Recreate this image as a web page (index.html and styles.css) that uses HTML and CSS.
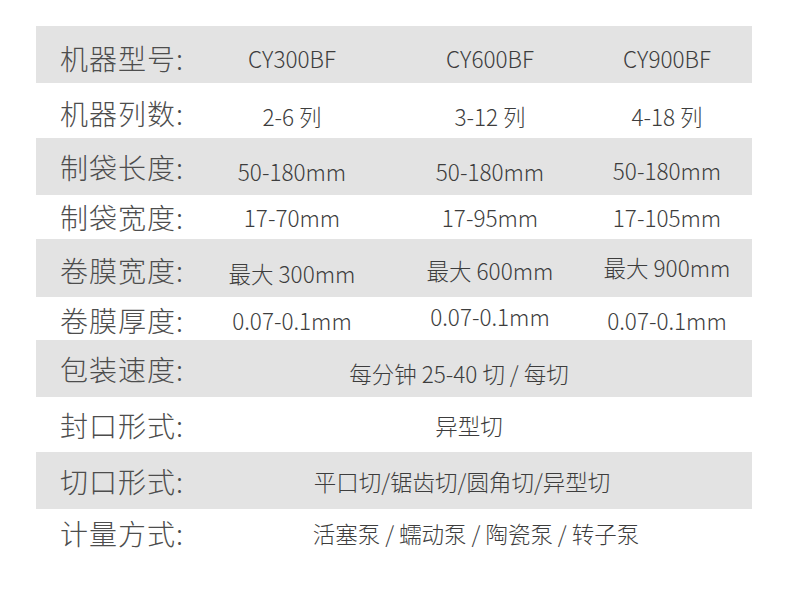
FILE: index.html
```html
<!DOCTYPE html>
<html lang="zh-CN">
<head>
<meta charset="utf-8">
<title>机器参数</title>
<link rel="stylesheet" href="styles.css">
</head>
<body>
<div class="spec">
  <div class="row gray h57 sh5">
    <div class="label">机器型号:</div>
    <div class="val">CY300BF</div>
    <div class="val">CY600BF</div>
    <div class="val">CY900BF</div>
  </div>
  <div class="row h55 sh3">
    <div class="label">机器列数:</div>
    <div class="val dn3">2-6 列</div>
    <div class="val dn3">3-12 列</div>
    <div class="val dn3">4-18 列</div>
  </div>
  <div class="row gray h57">
    <div class="label">制袋长度:</div>
    <div class="val dn6">50-180mm</div>
    <div class="val dn6">50-180mm</div>
    <div class="val dn3">50-180mm</div>
  </div>
  <div class="row h44">
    <div class="label">制袋宽度:</div>
    <div class="val">17-70mm</div>
    <div class="val">17-95mm</div>
    <div class="val">17-105mm</div>
  </div>
  <div class="row gray h58 sh3">
    <div class="label">卷膜宽度:</div>
    <div class="val dn3">最大 300mm</div>
    <div class="val">最大 600mm</div>
    <div class="val up3">最大 900mm</div>
  </div>
  <div class="row h43 sh2">
    <div class="label">卷膜厚度:</div>
    <div class="val">0.07-0.1mm</div>
    <div class="val up4">0.07-0.1mm</div>
    <div class="val">0.07-0.1mm</div>
  </div>
  <div class="row gray h57 sh1">
    <div class="label">包装速度:</div>
    <div class="val span left10 dn6">每分钟 25-40 切 / 每切</div>
  </div>
  <div class="row h55">
    <div class="label">封口形式:</div>
    <div class="val span">异型切</div>
  </div>
  <div class="row gray h57 sh1">
    <div class="label">切口形式:</div>
    <div class="val span left16">平口切/锯齿切/圆角切/异型切</div>
  </div>
  <div class="row h48">
    <div class="label">计量方式:</div>
    <div class="val span right14">活塞泵 / 蠕动泵 / 陶瓷泵 / 转子泵</div>
  </div>
</div>
</body>
</html>
```

FILE: styles.css
```css
html, body {
  margin: 0;
  padding: 0;
  background: #ffffff;
}

body {
  font-family: "Noto Sans CJK SC", "Noto Sans", sans-serif;
  color: #4a4a4a;
}

.spec {
  width: 716px;
  margin: 26px 0 0 36px;
}

.row {
  display: grid;
  grid-template-columns: 164px 184px 212px 142px;
  align-items: center;
  box-sizing: border-box;
}

.gray {
  background: #e3e3e3;
}

.h57 { height: 57px; }
.h55 { height: 55px; }
.h58 { height: 58px; }
.h44 { height: 44px; }
.h43 { height: 43px; }
.h48 { height: 48px; }

.sh1 { padding-top: 1px; }
.sh2 { padding-top: 2px; }
.sh3 { padding-top: 4px; }
.sh5 { padding-top: 6px; }

.label {
  padding-left: 24px;
  font-size: 28px;
  font-weight: 300;
  letter-spacing: 1px;
  line-height: 34px;
  color: #4d4d4d;
  white-space: nowrap;
}

.val {
  text-align: center;
  font-size: 22.5px;
  font-weight: 300;
  line-height: 28px;
  color: #3d3d3d;
  white-space: nowrap;
}

.span {
  grid-column: 2 / 5;
}

.left10 { padding-right: 20px; }
.left16 { padding-right: 14px; }
.right14 { padding-left: 14px; }

.dn3 { padding-top: 6px; }
.dn6 { padding-top: 8px; }
.up3 { padding-bottom: 6px; }
.up4 { padding-bottom: 8px; }
```
